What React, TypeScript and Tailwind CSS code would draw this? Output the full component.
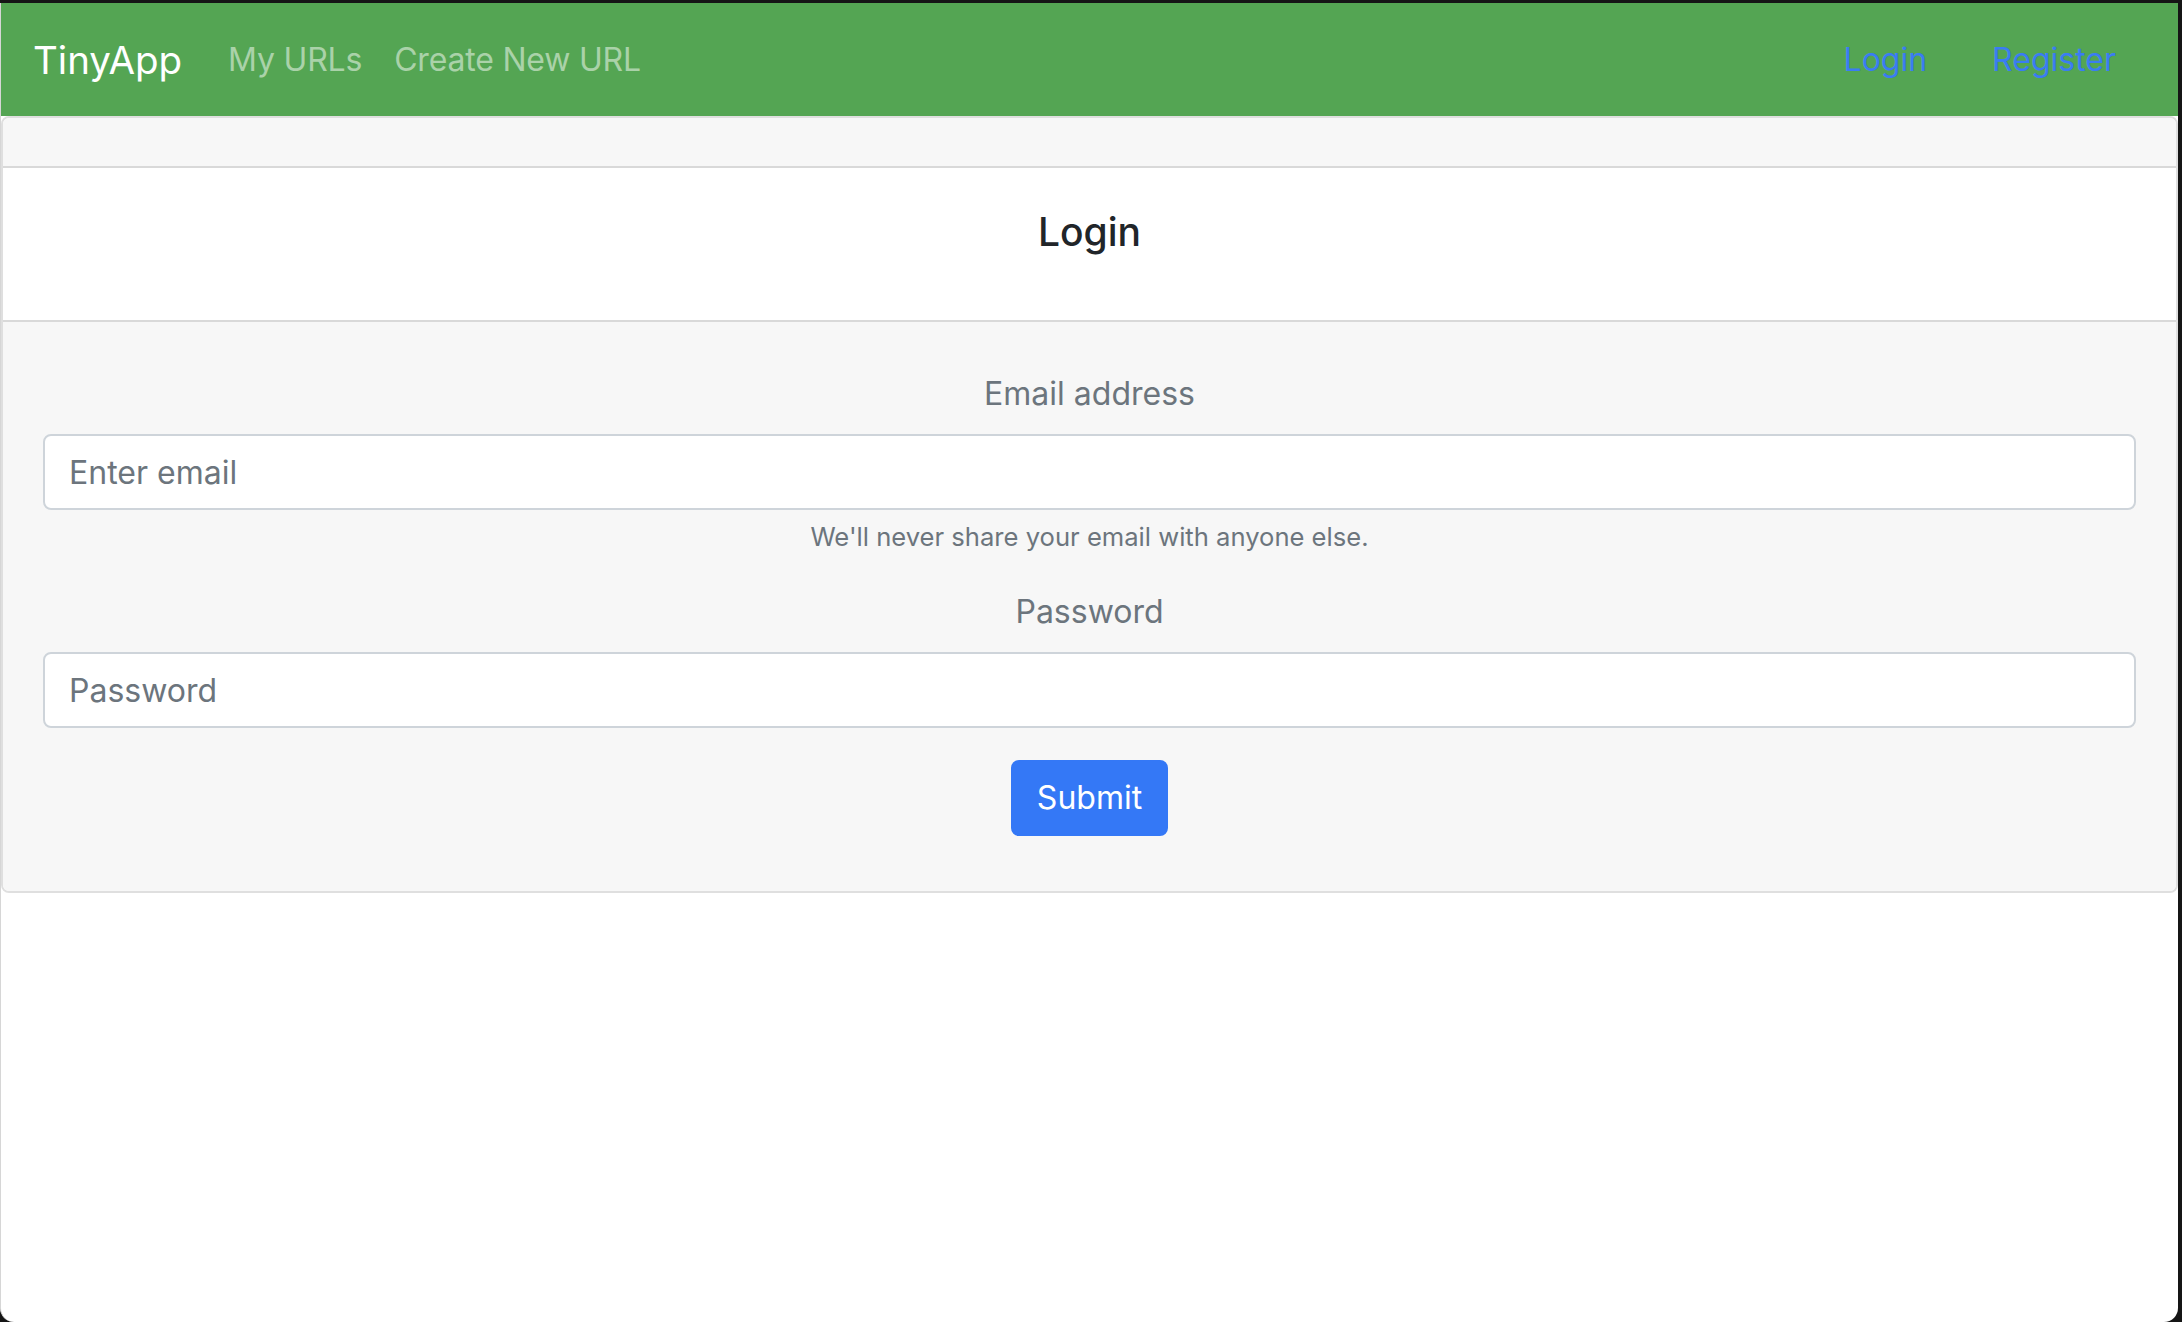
import React, { useState } from 'react';

const LoginPage: React.FC = () => {
  const [email, setEmail] = useState('');
  const [password, setPassword] = useState('');

  const handleSubmit = (e: React.FormEvent) => {
    e.preventDefault();
  };

  return (
    <div className="flex h-screen w-full flex-col bg-[#151515] pt-[3px] pr-[4px] font-['Inter',sans-serif]">
      <div className="flex flex-1 flex-col overflow-hidden rounded-b-[14px] border-l border-[#d6d6d6] bg-white">
        <nav className="flex h-[113px] shrink-0 items-center bg-[#54a553] px-[32px]">
          <a href="#" className="mr-[30px] text-[38.5px] leading-[60px] text-white">TinyApp</a>
          <a href="#" className="px-[16px] text-[32px] leading-[48px] tracking-[-0.2px] text-[#aad2a9]">My URLs</a>
          <a href="#" className="px-[16px] text-[32px] leading-[48px] tracking-[-0.2px] text-[#aad2a9]">Create New URL</a>
          <div className="ml-auto flex items-center gap-[65px] pr-[30px]">
            <a href="#" className="text-[32px] leading-[48px] text-[#3a7cf3]">Login</a>
            <a href="#" className="text-[32px] leading-[48px] text-[#3a7cf3]">Register</a>
          </div>
        </nav>

        <div className="overflow-hidden rounded-[8px] border-2 border-[#dfdfdf]">
          <div className="h-[50px] border-b-2 border-[#d9d9d9] bg-[#f7f7f7]"></div>
          <div className="h-[154px] border-b-2 border-[#d9d9d9] bg-white pt-[40px] text-center">
            <h3 className="text-[39px] font-medium leading-[48px] text-[#212529]">Login</h3>
          </div>
          <form onSubmit={handleSubmit} className="bg-[#f7f7f7] px-[40px] pt-[48px] pb-[55px]">
            <div className="mb-[32px]">
              <label className="mb-[16px] block text-center text-[32px] leading-[48px] text-[#6c757d]">
                Email address
              </label>
              <input
                type="email"
                value={email}
                onChange={(e) => setEmail(e.target.value)}
                placeholder="Enter email"
                className="block h-[76px] w-full rounded-[8px] border-2 border-[#ced4da] bg-white px-[24px] text-[32px] text-[#495057] outline-none placeholder:text-[#6c757d]"
              />
              <p className="mt-[8px] text-center text-[25.6px] leading-[38.4px] text-[#6c757d]">
                We'll never share your email with anyone else.
              </p>
            </div>
            <div className="mb-[32px]">
              <label className="mb-[16px] block text-center text-[32px] leading-[48px] text-[#6c757d]">
                Password
              </label>
              <input
                type="password"
                value={password}
                onChange={(e) => setPassword(e.target.value)}
                placeholder="Password"
                className="block h-[76px] w-full rounded-[8px] border-2 border-[#ced4da] bg-white px-[24px] text-[32px] text-[#495057] outline-none placeholder:text-[#6c757d]"
              />
            </div>
            <div className="flex justify-center">
              <button
                type="submit"
                className="h-[76px] rounded-[8px] border-2 border-[#3478f6] bg-[#3478f6] px-[24px] text-[32px] leading-[48px] text-white"
              >
                Submit
              </button>
            </div>
          </form>
        </div>
      </div>
    </div>
  );
};

export default function App() {
  return <LoginPage />;
}
